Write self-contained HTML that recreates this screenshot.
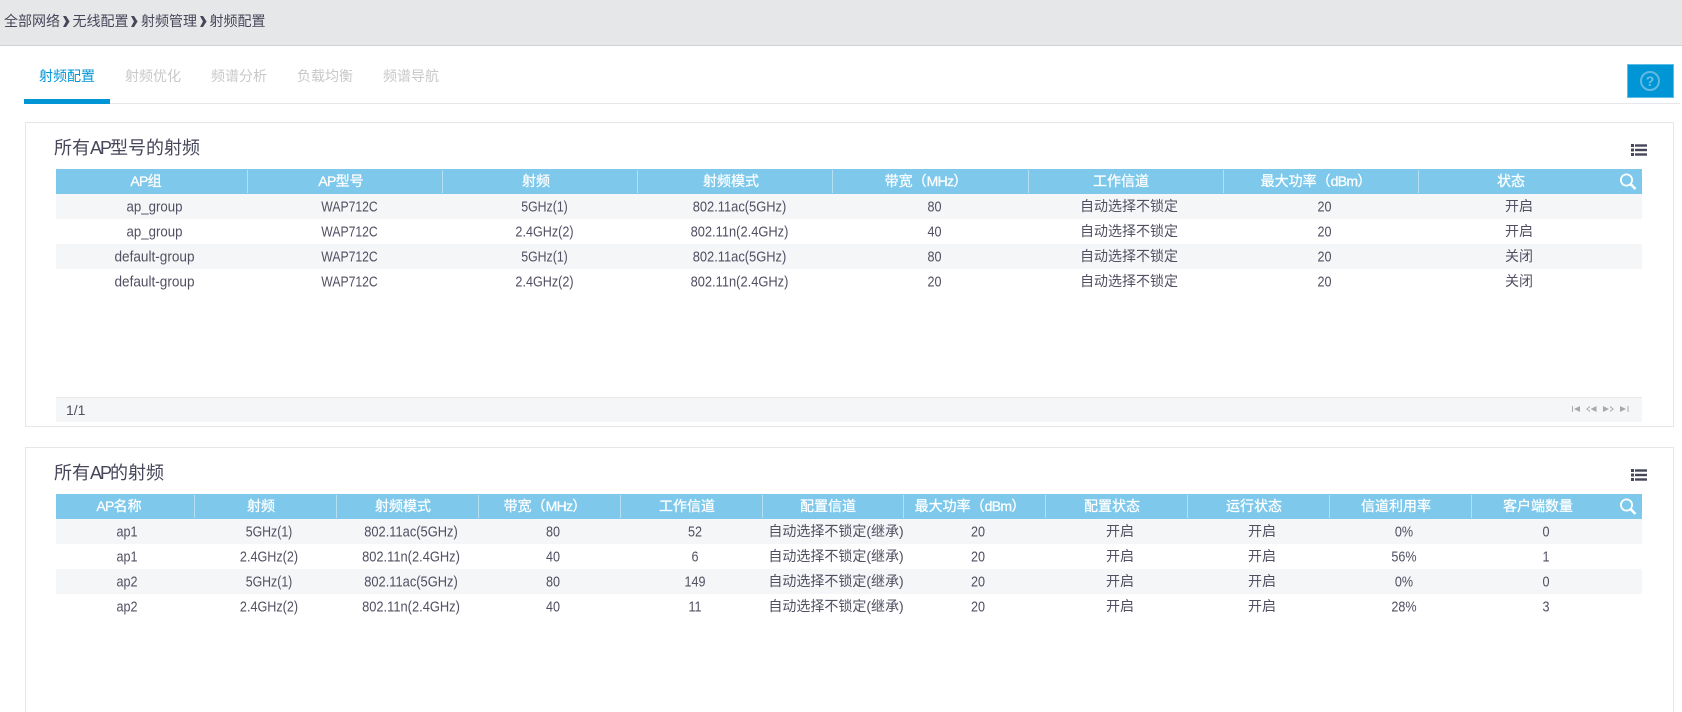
<!DOCTYPE html>
<html><head><meta charset="utf-8"><style>
html,body{margin:0;padding:0;width:1682px;height:712px;overflow:hidden;background:#fff}
body{position:relative;font-family:"Liberation Sans","Noto Sans CJK SC",sans-serif;font-size:14px;color:#505062}
.a{position:absolute}
.top{left:0;top:0;width:1682px;height:45px;background:#e6e7e8;border-bottom:1px solid #d0d1d3}
.bc{top:12px;line-height:18px;color:#46465a;white-space:nowrap}
.tab{top:67px;line-height:18px;color:#c8c8c8;white-space:nowrap}
.panel{left:25px;width:1647px;border:1px solid #e6e7e8;box-sizing:content-box}
.title{left:54px;font-size:18px;line-height:24px;color:#46465a;white-space:nowrap}
.title span{letter-spacing:-2px}
.head{left:56px;width:1586px;height:25px;background:#7ec9eb}
.sep{width:1px;height:23px;background:#b5e0f3}
.row{left:56px;width:1586px;height:25px}
.alt{background:#f5f6f8}
.c{position:absolute;text-align:center;line-height:25px;height:25px;white-space:nowrap}
.h{color:#fff;-webkit-text-stroke:.25px #fff}
.h span{letter-spacing:-.7px}
.s87{transform:scale(.87,1.08)}
.s88{transform:scale(.88,1.08)}
.s90{transform:scale(.9,1.08)}
.s92{transform:scale(.92,1.08)}
.s945{transform:scale(.945,1.08)}
.s97{transform:scale(.97,1.08)}
</style></head><body>
<div class="a top"></div>
<div class="a bc" style="left:4px">全部网络</div>
<svg class="a" style="left:63px;top:16px" width="7" height="11"><path d="M0 0h3l3.600 5.500L3 11H0l3-5.500z" fill="#46465a"/></svg>
<div class="a bc" style="left:72.500px">无线配置</div>
<svg class="a" style="left:131px;top:16px" width="7" height="11"><path d="M0 0h3l3.600 5.500L3 11H0l3-5.500z" fill="#46465a"/></svg>
<div class="a bc" style="left:141px">射频管理</div>
<svg class="a" style="left:200px;top:16px" width="7" height="11"><path d="M0 0h3l3.600 5.500L3 11H0l3-5.500z" fill="#46465a"/></svg>
<div class="a bc" style="left:209.500px">射频配置</div>

<div class="a tab" style="left:39px;color:#0096d6">射频配置</div>
<div class="a tab" style="left:125px">射频优化</div>
<div class="a tab" style="left:211px">频谱分析</div>
<div class="a tab" style="left:297px">负载均衡</div>
<div class="a tab" style="left:383px">频谱导航</div>
<div class="a" style="left:24px;top:103px;width:1656px;height:1px;background:#e6e7e8"></div>
<div class="a" style="left:24px;top:99px;width:86px;height:5px;background:#0096d6"></div>
<div class="a" style="left:1627px;top:64px;height:32px;background:#0096d6;border:1px solid #5cbde6;box-sizing:content-box;width:45px"></div>
<svg class="a" style="left:1640px;top:70px" width="22" height="22"><circle cx="10" cy="11" r="9" fill="none" stroke="#5fb9e0" stroke-width="2"/><text x="10" y="16" text-anchor="middle" font-family="Liberation Sans" font-weight="700" font-size="14" fill="#6cc0e6">?</text></svg>

<div class="a panel" style="top:122px;height:303px"></div>
<div class="a panel" style="top:447px;height:280px"></div>

<div class="a title" style="top:136px">所有<span>AP</span>型号的射频</div>
<svg class="a" style="left:1631px;top:144px" width="16" height="12" fill="#46465a"><rect width="3" height="3" y="0"/><rect width="3" height="3" y="4.500"/><rect width="3" height="3" y="9"/><rect x="4" width="12" height="2.400" y=".3"/><rect x="4" width="12" height="2.400" y="4.800"/><rect x="4" width="12" height="2.400" y="9.300"/></svg>
<div class="a head" style="top:169px"></div>
<div class="a sep" style="left:247px;top:170px"></div><div class="a sep" style="left:442px;top:170px"></div><div class="a sep" style="left:637px;top:170px"></div><div class="a sep" style="left:832px;top:170px"></div><div class="a sep" style="left:1028px;top:170px"></div><div class="a sep" style="left:1223px;top:170px"></div><div class="a sep" style="left:1418px;top:170px"></div>
<svg class="a" style="left:1619px;top:173px" width="19" height="18"><circle cx="7.500" cy="7" r="5.600" fill="none" stroke="#fff" stroke-width="1.800"/><path d="M11.500 11l5 5" stroke="#fff" stroke-width="2.600"/></svg>
<div class="a" style="left:48px;top:169px;height:25px;width:1600px">
<div class="c h" style="left:.5px;width:195px"><span>AP</span>组</div><div class="c h" style="left:195.500px;width:195px"><span>AP</span>型号</div><div class="c h" style="left:390.500px;width:195px">射频</div><div class="c h" style="left:585.500px;width:195px">射频模式</div><div class="c h" style="left:780.500px;width:195px">带宽（<span>MHz</span>）</div><div class="c h" style="left:975.500px;width:195px">工作信道</div><div class="c h" style="left:1170.500px;width:195px">最大功率（<span>dBm</span>）</div><div class="c h" style="left:1365.500px;width:195px">状态</div></div>

<div class="a row alt" style="top:194px"><div class="c s945" style="left:.5px;width:195px">ap_group</div><div class="c s87" style="left:195.500px;width:195px">WAP712C</div><div class="c s88" style="left:390.500px;width:195px">5GHz(1)</div><div class="c s92" style="left:585.500px;width:195px">802.11ac(5GHz)</div><div class="c s90" style="left:780.500px;width:195px">80</div><div class="c" style="left:975.500px;width:195px">自动选择不锁定</div><div class="c s90" style="left:1170.500px;width:195px">20</div><div class="c" style="left:1365.500px;width:195px">开启</div></div>
<div class="a row" style="top:219px"><div class="c s945" style="left:.5px;width:195px">ap_group</div><div class="c s87" style="left:195.500px;width:195px">WAP712C</div><div class="c s90" style="left:390.500px;width:195px">2.4GHz(2)</div><div class="c s92" style="left:585.500px;width:195px">802.11n(2.4GHz)</div><div class="c s90" style="left:780.500px;width:195px">40</div><div class="c" style="left:975.500px;width:195px">自动选择不锁定</div><div class="c s90" style="left:1170.500px;width:195px">20</div><div class="c" style="left:1365.500px;width:195px">开启</div></div>
<div class="a row alt" style="top:244px"><div class="c s97" style="left:.5px;width:195px">default-group</div><div class="c s87" style="left:195.500px;width:195px">WAP712C</div><div class="c s88" style="left:390.500px;width:195px">5GHz(1)</div><div class="c s92" style="left:585.500px;width:195px">802.11ac(5GHz)</div><div class="c s90" style="left:780.500px;width:195px">80</div><div class="c" style="left:975.500px;width:195px">自动选择不锁定</div><div class="c s90" style="left:1170.500px;width:195px">20</div><div class="c" style="left:1365.500px;width:195px">关闭</div></div>
<div class="a row" style="top:269px"><div class="c s97" style="left:.5px;width:195px">default-group</div><div class="c s87" style="left:195.500px;width:195px">WAP712C</div><div class="c s90" style="left:390.500px;width:195px">2.4GHz(2)</div><div class="c s92" style="left:585.500px;width:195px">802.11n(2.4GHz)</div><div class="c s90" style="left:780.500px;width:195px">20</div><div class="c" style="left:975.500px;width:195px">自动选择不锁定</div><div class="c s90" style="left:1170.500px;width:195px">20</div><div class="c" style="left:1365.500px;width:195px">关闭</div></div>

<div class="a" style="left:56px;top:397px;width:1586px;height:25px;background:#f5f6f8;border-top:1px solid #e6e7e8;box-sizing:border-box"></div>
<div class="a" style="left:66px;top:398px;line-height:24px">1/1</div>
<svg class="a" style="left:1571px;top:405px" width="60" height="8" fill="#a9a9ad"><rect x="1" y="1" width="1" height="6"/><path d="M3 4l6-3v6z"/><path d="M15 4l4-3v1.200L16.500 4 19 5.800V7z"/><path d="M19.500 4l6-3v6z"/><path d="M32 1l6 3-6 3z"/><path d="M39 1l4 3-4 3V5.800L41.500 4 39 2.200z"/><path d="M49 1l6 3-6 3z"/><rect x="56.500" y="1" width="1" height="6"/></svg>

<div class="a title" style="top:461px">所有<span>AP</span>的射频</div>
<svg class="a" style="left:1631px;top:469px" width="16" height="12" fill="#46465a"><rect width="3" height="3" y="0"/><rect width="3" height="3" y="4.500"/><rect width="3" height="3" y="9"/><rect x="4" width="12" height="2.400" y=".3"/><rect x="4" width="12" height="2.400" y="4.800"/><rect x="4" width="12" height="2.400" y="9.300"/></svg>
<div class="a head" style="top:494px"></div>
<div class="a sep" style="left:194px;top:495px"></div><div class="a sep" style="left:336px;top:495px"></div><div class="a sep" style="left:478px;top:495px"></div><div class="a sep" style="left:620px;top:495px"></div><div class="a sep" style="left:762px;top:495px"></div><div class="a sep" style="left:903px;top:495px"></div><div class="a sep" style="left:1045px;top:495px"></div><div class="a sep" style="left:1187px;top:495px"></div><div class="a sep" style="left:1329px;top:495px"></div><div class="a sep" style="left:1471px;top:495px"></div>
<svg class="a" style="left:1619px;top:498px" width="19" height="18"><circle cx="7.500" cy="7" r="5.600" fill="none" stroke="#fff" stroke-width="1.800"/><path d="M11.500 11l5 5" stroke="#fff" stroke-width="2.600"/></svg>
<div class="a" style="left:48px;top:494px;height:25px;width:1600px">
<div class="c h" style="left:0;width:142px"><span>AP</span>名称</div><div class="c h" style="left:142px;width:142px">射频</div><div class="c h" style="left:284px;width:142px">射频模式</div><div class="c h" style="left:426px;width:142px">带宽（<span>MHz</span>）</div><div class="c h" style="left:568px;width:142px">工作信道</div><div class="c h" style="left:709px;width:142px">配置信道</div><div class="c h" style="left:851px;width:142px">最大功率（<span>dBm</span>）</div><div class="c h" style="left:993px;width:142px">配置状态</div><div class="c h" style="left:1135px;width:142px">运行状态</div><div class="c h" style="left:1277px;width:142px">信道利用率</div><div class="c h" style="left:1419px;width:142px">客户端数量</div></div>

<div class="a row alt" style="top:519px"><div class="c s90" style="left:0;width:142px">ap1</div><div class="c s88" style="left:142px;width:142px">5GHz(1)</div><div class="c s92" style="left:284px;width:142px">802.11ac(5GHz)</div><div class="c s90" style="left:426px;width:142px">80</div><div class="c s90" style="left:568px;width:142px">52</div><div class="c" style="left:709px;width:142px">自动选择不锁定(继承)</div><div class="c s90" style="left:851px;width:142px">20</div><div class="c" style="left:993px;width:142px">开启</div><div class="c" style="left:1135px;width:142px">开启</div><div class="c s90" style="left:1277px;width:142px">0%</div><div class="c s90" style="left:1419px;width:142px">0</div></div>
<div class="a row" style="top:544px"><div class="c s90" style="left:0;width:142px">ap1</div><div class="c s90" style="left:142px;width:142px">2.4GHz(2)</div><div class="c s92" style="left:284px;width:142px">802.11n(2.4GHz)</div><div class="c s90" style="left:426px;width:142px">40</div><div class="c s90" style="left:568px;width:142px">6</div><div class="c" style="left:709px;width:142px">自动选择不锁定(继承)</div><div class="c s90" style="left:851px;width:142px">20</div><div class="c" style="left:993px;width:142px">开启</div><div class="c" style="left:1135px;width:142px">开启</div><div class="c s90" style="left:1277px;width:142px">56%</div><div class="c s90" style="left:1419px;width:142px">1</div></div>
<div class="a row alt" style="top:569px"><div class="c s90" style="left:0;width:142px">ap2</div><div class="c s88" style="left:142px;width:142px">5GHz(1)</div><div class="c s92" style="left:284px;width:142px">802.11ac(5GHz)</div><div class="c s90" style="left:426px;width:142px">80</div><div class="c s90" style="left:568px;width:142px">149</div><div class="c" style="left:709px;width:142px">自动选择不锁定(继承)</div><div class="c s90" style="left:851px;width:142px">20</div><div class="c" style="left:993px;width:142px">开启</div><div class="c" style="left:1135px;width:142px">开启</div><div class="c s90" style="left:1277px;width:142px">0%</div><div class="c s90" style="left:1419px;width:142px">0</div></div>
<div class="a row" style="top:594px"><div class="c s90" style="left:0;width:142px">ap2</div><div class="c s90" style="left:142px;width:142px">2.4GHz(2)</div><div class="c s92" style="left:284px;width:142px">802.11n(2.4GHz)</div><div class="c s90" style="left:426px;width:142px">40</div><div class="c s90" style="left:568px;width:142px">11</div><div class="c" style="left:709px;width:142px">自动选择不锁定(继承)</div><div class="c s90" style="left:851px;width:142px">20</div><div class="c" style="left:993px;width:142px">开启</div><div class="c" style="left:1135px;width:142px">开启</div><div class="c s90" style="left:1277px;width:142px">28%</div><div class="c s90" style="left:1419px;width:142px">3</div></div>
</body></html>
